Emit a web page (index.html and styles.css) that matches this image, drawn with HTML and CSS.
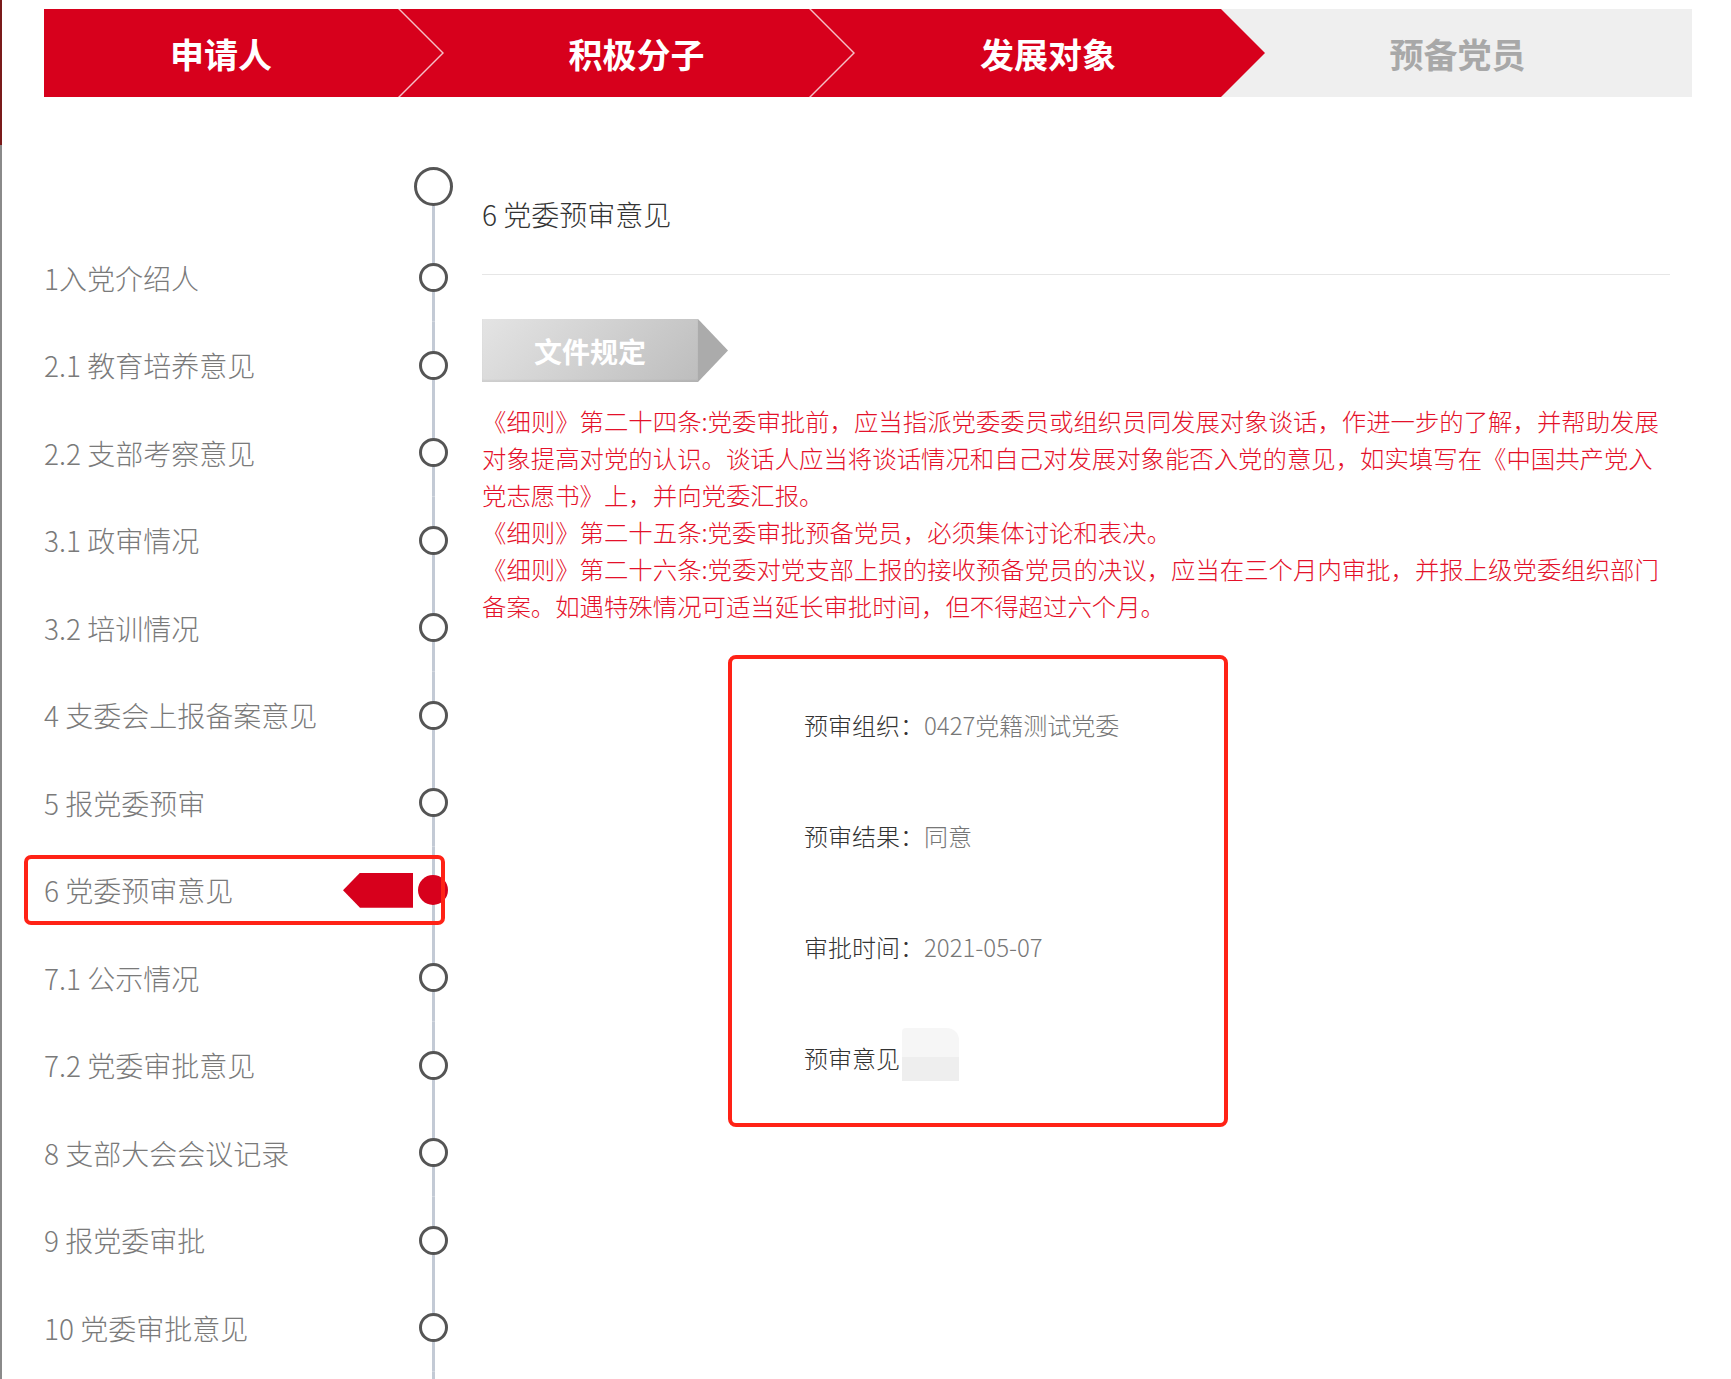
FILE: index.html
```html
<!DOCTYPE html>
<html lang="zh-CN">
<head>
    <meta charset="UTF-8">
    <title>发展对象 - 党委预审意见</title>
    <link rel="stylesheet" href="styles.css">
</head>
<body>

<div class="steps">
    <div class="step step-done step-first"><span class="step-shape">申请人</span></div>
    <div class="step step-done step-second"><span class="step-shape">积极分子</span></div>
    <div class="step step-current"><span class="step-shape">发展对象</span></div>
    <div class="step step-todo"><span class="step-shape">预备党员</span></div>
</div>

<div class="main">
    <!-- 左侧流程 -->
    <div class="timeline">
        <div class="tl-head">
            <div class="tl-node"><span class="tl-circle"></span></div>
        </div>
        <div class="tl-item"><div class="tl-label">1入党介绍人</div><div class="tl-node"><span class="tl-circle"></span></div></div>
        <div class="tl-item"><div class="tl-label">2.1 教育培养意见</div><div class="tl-node"><span class="tl-circle"></span></div></div>
        <div class="tl-item"><div class="tl-label">2.2 支部考察意见</div><div class="tl-node"><span class="tl-circle"></span></div></div>
        <div class="tl-item"><div class="tl-label">3.1 政审情况</div><div class="tl-node"><span class="tl-circle"></span></div></div>
        <div class="tl-item"><div class="tl-label">3.2 培训情况</div><div class="tl-node"><span class="tl-circle"></span></div></div>
        <div class="tl-item"><div class="tl-label">4 支委会上报备案意见</div><div class="tl-node"><span class="tl-circle"></span></div></div>
        <div class="tl-item"><div class="tl-label">5 报党委预审</div><div class="tl-node"><span class="tl-circle"></span></div></div>
        <div class="tl-item is-active">
            <div class="tl-label">6 党委预审意见<span class="tl-flag"></span></div>
            <div class="tl-node"><span class="tl-dot"></span></div>
        </div>
        <div class="tl-item"><div class="tl-label">7.1 公示情况</div><div class="tl-node"><span class="tl-circle"></span></div></div>
        <div class="tl-item"><div class="tl-label">7.2 党委审批意见</div><div class="tl-node"><span class="tl-circle"></span></div></div>
        <div class="tl-item"><div class="tl-label">8 支部大会会议记录</div><div class="tl-node"><span class="tl-circle"></span></div></div>
        <div class="tl-item"><div class="tl-label">9 报党委审批</div><div class="tl-node"><span class="tl-circle"></span></div></div>
        <div class="tl-item"><div class="tl-label">10 党委审批意见</div><div class="tl-node"><span class="tl-circle"></span></div></div>
        <div class="tl-tail"></div>
    </div>

    <!-- 右侧详情 -->
    <div class="detail">
        <div class="detail-title">6 党委预审意见</div>

        <div class="doc-tag">
            <span class="doc-tag-body">文件规定</span>
            <span class="doc-tag-arrow"></span>
        </div>

        <div class="doc-rules">
            <p>《细则》第二十四条:党委审批前，应当指派党委委员或组织员同发展对象谈话，作进一步的了解，并帮助发展对象提高对党的认识。谈话人应当将谈话情况和自己对发展对象能否入党的意见，如实填写在《中国共产党入党志愿书》上，并向党委汇报。</p>
            <p>《细则》第二十五条:党委审批预备党员，必须集体讨论和表决。</p>
            <p>《细则》第二十六条:党委对党支部上报的接收预备党员的决议，应当在三个月内审批，并报上级党委组织部门备案。如遇特殊情况可适当延长审批时间，但不得超过六个月。</p>
        </div>

        <div class="review-box">
            <div class="review-row"><span class="review-label">预审组织：</span><span class="review-value">0427党籍测试党委</span></div>
            <div class="review-row"><span class="review-label">预审结果：</span><span class="review-value">同意</span></div>
            <div class="review-row"><span class="review-label">审批时间：</span><span class="review-value">2021-05-07</span></div>
            <div class="review-row"><span class="review-label">预审意见</span><span class="review-thumb"></span></div>
        </div>
    </div>
</div>

</body>
</html>
```

FILE: styles.css
```css
* {
    margin: 0;
    padding: 0;
    box-sizing: border-box;
}

html {
    background-color: #fff;
}

html, body {
    height: 100%;
    overflow: hidden;
}

/* 左侧窗口边线：上段深红，下段灰 */
body {
    font-family: "Noto Sans CJK SC", "Noto Sans", sans-serif;
    padding-left: 2px;
    background: linear-gradient(#7a1a1a 145px, #8a8a8a 145px) left top / 2px 100% no-repeat;
}

/* 顶部步骤条 */
.steps {
    display: flex;
    height: 88px;
    margin: 9px 39px 0 42px;
    background-color: #efefef;
}

.step {
    position: relative;
    height: 100%;
}

.step-shape {
    display: flex;
    height: 100%;
    align-items: center;
    justify-content: center;
    font-size: 34px;
    font-weight: bold;
    color: #fff;
    padding: 0 22px 0 44px;
}

.step-done .step-shape,
.step-current .step-shape {
    background-color: #d7001c;
    clip-path: polygon(0 0, calc(100% - 44px) 0, 100% 50%, calc(100% - 44px) 100%, 0 100%);
}

.step-done::before {
    content: "";
    position: absolute;
    top: 0;
    bottom: 0;
    left: 2px;
    right: -2px;
    z-index: -1;
    background-color: rgba(255, 255, 255, 0.75);
    clip-path: polygon(0 0, calc(100% - 44px) 0, 100% 50%, calc(100% - 44px) 100%, 0 100%);
}

.step-first {
    width: 398px;
    z-index: 4;
}

.step-first .step-shape {
    padding: 0 44px 0 0;
}

.step-second {
    width: 455px;
    margin-left: -44px;
    z-index: 3;
}

.step-current {
    width: 456px;
    margin-left: -44px;
    z-index: 2;
}

.step-todo {
    flex: 1;
    margin-left: -44px;
    z-index: 1;
}

.step-todo .step-shape {
    color: #a8a8a8;
    padding: 0 42px 0 44px;
}

/* 主体 */
.main {
    display: flex;
    padding-left: 42px;
}

.timeline {
    width: 419px;
    margin-top: 42px;
}

.tl-head {
    height: 95px;
    display: flex;
    justify-content: flex-end;
}

.tl-item {
    height: 87.5px;
    display: flex;
    align-items: center;
    position: relative;
}

.tl-label {
    flex: 1;
    display: flex;
    align-items: center;
    justify-content: space-between;
    font-size: 28px;
    font-weight: 300;
    color: #7a7a7a;
}

.tl-node {
    width: 60px;
    height: 100%;
    display: flex;
    align-items: center;
    justify-content: center;
    background: linear-gradient(#c3cad5, #c3cad5) center / 3px 100% no-repeat;
}

.tl-head .tl-node {
    background: linear-gradient(#c3cad5, #c3cad5) center bottom / 3px 50% no-repeat;
}

.tl-circle {
    width: 29px;
    height: 29px;
    border: 3px solid #555;
    border-radius: 50%;
    background-color: #fff;
}

.tl-head .tl-circle {
    width: 39px;
    height: 39px;
}

.tl-dot {
    width: 30px;
    height: 30px;
    border-radius: 50%;
    background-color: #d7001c;
}

.tl-flag {
    width: 70px;
    height: 35px;
    margin-right: -10px;
    background-color: #d7001c;
    clip-path: polygon(17px 0, 100% 0, 100% 100%, 17px 100%, 0 50%);
}

/* 当前步骤的红框 */
.tl-item.is-active::after {
    content: "";
    position: absolute;
    left: -20px;
    right: 18px;
    top: 8px;
    bottom: 9px;
    border: 4px solid #ff2216;
    border-radius: 7px;
}

.tl-tail {
    width: 60px;
    height: 40px;
    margin-left: auto;
    background: linear-gradient(#c3cad5, #c3cad5) center / 3px 100% no-repeat;
}

/* 右侧内容 */
.detail {
    width: 1188px;
    margin-left: 19px;
}

.detail-title {
    margin-top: 97px;
    padding-bottom: 40px;
    font-size: 28px;
    font-weight: 300;
    line-height: 40px;
    color: #333;
    border-bottom: 1px solid #e6e6e6;
}

.doc-tag {
    display: flex;
    height: 63px;
    margin-top: 44px;
}

.doc-tag-body {
    width: 216px;
    display: flex;
    align-items: center;
    justify-content: center;
    font-size: 28px;
    font-weight: bold;
    color: #fff;
    background: linear-gradient(135deg, #e4e4e4, #bdbdbd);
    box-shadow: inset 0 -2px 2px rgba(0, 0, 0, 0.06);
}

.doc-tag-arrow {
    width: 30px;
    background-color: #ababab;
    clip-path: polygon(0 0, 100% 50%, 0 100%);
}

.doc-rules {
    margin-top: 20px;
    font-size: 24.4px;
    font-weight: 300;
    line-height: 37px;
    color: #e4112a;
}

.review-box {
    width: 500px;
    height: 472px;
    margin: 31px 0 0 246px;
    padding: 10px 0 10px 72px;
    border: 4px solid #ff2216;
    border-radius: 8px;
}

.review-row {
    height: 111px;
    display: flex;
    align-items: center;
    font-size: 24px;
    font-weight: 300;
}

.review-label {
    color: #333;
}

.review-value {
    color: #777;
}

.review-thumb {
    width: 57px;
    height: 53px;
    margin: -6px 0 0 2px;
    border-radius: 4px 12px 0 0;
    background: linear-gradient(#f6f6f6 55%, #eeeeee 55%);
}
```
